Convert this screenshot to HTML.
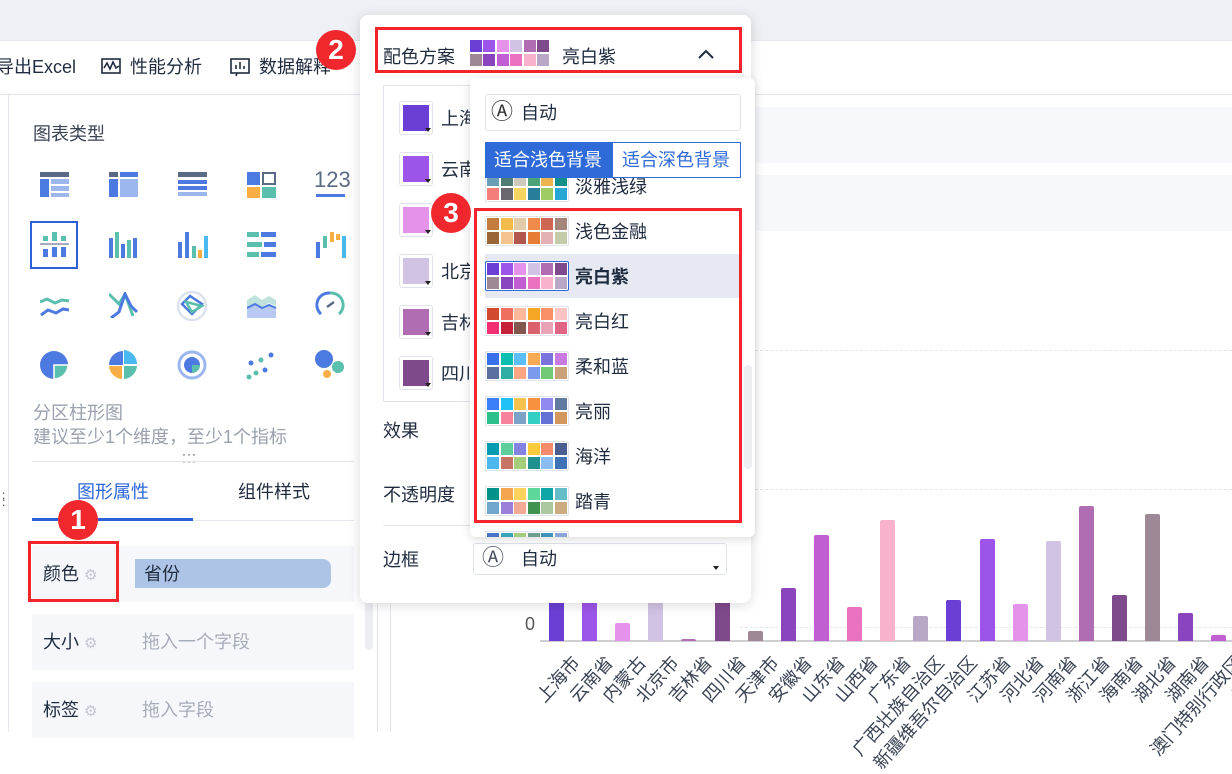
<!DOCTYPE html>
<html><head><meta charset="utf-8"><style>
*{margin:0;padding:0;box-sizing:border-box}
body{width:1232px;height:732px;overflow:hidden;background:#fff;font-family:"Liberation Sans","Noto Sans CJK SC",sans-serif;color:#1f2b3e;font-size:18px;position:relative}
.a{position:absolute}
.t{position:absolute;white-space:nowrap;line-height:20px}
.sw{position:absolute;display:grid;grid-template-columns:repeat(6,12px);grid-auto-rows:12px;gap:2px 1.6px;padding:1px;border:1px solid #dfe3ea;border-radius:2px;background:#fff}
.sw i{display:block}
.badge{position:absolute;width:40px;height:40px;border-radius:50%;background:#f0282d;color:#fff;font-size:28px;line-height:40px;text-align:center;font-weight:bold}
.red{position:absolute;border:3px solid #f2242c}
.bar{position:absolute;width:15px;bottom:91px;border-radius:2px 2px 0 0}
.lb{position:absolute;top:650px;width:0;height:0}
.lb span{position:absolute;right:0;top:0;white-space:nowrap;transform-origin:right top;transform:rotate(-48deg);font-size:18px;color:#3a4354}
.row{position:absolute;left:32px;width:322px;background:#f5f7fb}
.cs{position:absolute;left:399px;width:34px;height:34px;border:1px solid #dfe3ea;border-radius:3px;padding:3px}
.cs i{display:block;width:100%;height:100%}
.cs b{position:absolute;right:1px;bottom:2px;border:3px solid transparent;border-top:4px solid #222;border-bottom:0}
.g{color:#c2c6ce;font-size:15px}
</style></head><body>
<div class="a" style="left:0;top:0;width:1232px;height:40px;background:#eef0f5"></div>
<div class="a" style="left:0;top:40px;width:1232px;height:1px;background:#e3e6ed"></div>
<div class="a" style="left:0;top:94px;width:1232px;height:1px;background:#e3e6ed"></div>
<div class="t" style="left:-4px;top:57px">导出Excel</div>
<svg class="a" style="left:101px;top:57px" width="20" height="20" viewBox="0 0 20 20" fill="none" stroke="#1f2b3e" stroke-width="1.6"><rect x="1" y="2" width="18" height="14"/><path d="M3 11l3-5 3 6 3-7 3 6 3-2"/></svg>
<div class="t" style="left:130px;top:57px">性能分析</div>
<svg class="a" style="left:230px;top:57px" width="20" height="20" viewBox="0 0 20 20" fill="none" stroke="#1f2b3e" stroke-width="1.6"><rect x="1" y="2" width="18" height="14"/><path d="M6 12V8M10 12V5M14 12V9M7 16l-1 3"/></svg>
<div class="t" style="left:259px;top:57px">数据解释</div>

<div class="a" style="left:8px;top:95px;width:1px;height:637px;background:#e3e6ed"></div>
<div class="a" style="left:377px;top:95px;width:1px;height:637px;background:#e3e6ed"></div>
<div class="a" style="left:390px;top:279px;width:1px;height:453px;background:#e3e6ed"></div>
<div class="t" style="left:33px;top:124px;color:#3a4354">图表类型</div>
<svg class="a" style="left:40px;top:172px" width="30" height="26"><rect x="0" y="0" width="29" height="5" fill="#5c6b85"/><rect x="0" y="7" width="9" height="18" fill="#4d7ae0"/><rect x="11" y="7" width="18" height="5" fill="#9cb6ee"/><rect x="11" y="14" width="18" height="5" fill="#9cb6ee"/><rect x="11" y="21" width="18" height="4" fill="#9cb6ee"/></svg>
<svg class="a" style="left:109px;top:172px" width="30" height="26"><rect x="0" y="0" width="9" height="5" fill="#5c6b85"/><rect x="11" y="0" width="18" height="5" fill="#4d7ae0"/><rect x="0" y="7" width="9" height="18" fill="#4d7ae0"/><rect x="11" y="7" width="18" height="18" fill="#9cb6ee"/></svg>
<svg class="a" style="left:178px;top:172px" width="30" height="26"><rect x="0" y="0" width="29" height="5" fill="#5c6b85"/><rect x="0" y="8" width="29" height="4" fill="#4d7ae0"/><rect x="0" y="14" width="29" height="4" fill="#4d7ae0"/><rect x="0" y="20" width="29" height="4" fill="#9cb6ee"/></svg>
<svg class="a" style="left:247px;top:172px" width="30" height="26"><rect x="0" y="0" width="13" height="13" fill="#4d7ae0"/><rect x="16" y="1" width="12" height="11" fill="none" stroke="#5c6b85" stroke-width="2"/><rect x="0" y="15" width="13" height="11" fill="#f9ae45"/><rect x="15" y="15" width="14" height="11" fill="#5bbfae"/></svg>
<div class="t" style="left:314px;top:170px;font-size:22px;color:#5c6b85">123</div>
<div class="a" style="left:316px;top:194px;width:29px;height:3px;background:#4d7ae0"></div>
<div class="a" style="left:30px;top:221px;width:48px;height:48px;border:2px solid #2d5fd8"></div>
<svg class="a" style="left:40px;top:232px" width="30" height="26"><rect x="3" y="4" width="5" height="5" fill="#5bbfae"/><rect x="12" y="0" width="5" height="9" fill="#5bbfae"/><rect x="21" y="4" width="5" height="5" fill="#5bbfae"/><rect x="0" y="11" width="29" height="2" fill="#aab"/><rect x="3" y="17" width="5" height="8" fill="#4d7ae0"/><rect x="12" y="15" width="5" height="10" fill="#4d7ae0"/><rect x="21" y="15" width="5" height="10" fill="#4d7ae0"/></svg>
<svg class="a" style="left:109px;top:232px" width="30" height="26"><rect x="0" y="6" width="4" height="20" fill="#4d7ae0"/><rect x="6" y="0" width="4" height="26" fill="#5bbfae"/><rect x="12" y="12" width="4" height="14" fill="#4d7ae0"/><rect x="18" y="8" width="4" height="18" fill="#5bbfae"/><rect x="24" y="6" width="4" height="20" fill="#4d7ae0"/></svg>
<svg class="a" style="left:178px;top:232px" width="30" height="26"><rect x="0" y="10" width="4" height="16" fill="#4d7ae0"/><rect x="7" y="0" width="4" height="26" fill="#4d7ae0"/><rect x="14" y="14" width="4" height="12" fill="#5bbfae"/><rect x="20" y="18" width="4" height="8" fill="#f9ae45"/><rect x="26" y="4" width="4" height="22" fill="#49b9f0"/></svg>
<svg class="a" style="left:247px;top:232px" width="30" height="26"><rect x="0" y="0" width="12" height="5" fill="#5bbfae"/><rect x="14" y="0" width="15" height="5" fill="#4d7ae0"/><rect x="0" y="10" width="15" height="5" fill="#5bbfae"/><rect x="17" y="10" width="12" height="5" fill="#4d7ae0"/><rect x="0" y="20" width="12" height="5" fill="#5bbfae"/><rect x="14" y="20" width="15" height="5" fill="#4d7ae0"/></svg>
<svg class="a" style="left:316px;top:232px" width="30" height="26"><rect x="0" y="10" width="4" height="16" fill="#4d7ae0"/><rect x="7" y="4" width="4" height="12" fill="#5bbfae"/><rect x="14" y="0" width="4" height="10" fill="#f9ae45"/><rect x="20" y="2" width="4" height="6" fill="#f9ae45"/><rect x="26" y="4" width="4" height="22" fill="#49b9f0"/></svg>
<svg class="a" style="left:40px;top:292px" width="30" height="26" fill="none" stroke-width="3"><path d="M0 10l7-3 8 4 7-3 7 1" stroke="#5bbfae"/><path d="M1 23l7-5 8 3 7-4 6 1" stroke="#4d7ae0"/></svg>
<svg class="a" style="left:109px;top:292px" width="30" height="26" fill="none" stroke-width="3"><path d="M0 2l10 10 6-10 8 22" stroke="#5bbfae"/><path d="M2 26l8-6 6-18 6 12 6 6" stroke="#4d7ae0"/></svg>
<svg class="a" style="left:176px;top:290px" width="32" height="32" fill="none" stroke-width="2.5"><circle cx="16" cy="16" r="14" stroke="#dde3ee"/><path d="M6 14l8-8 12 8-10 10z" stroke="#4d7ae0"/><path d="M10 12l16 4-10 6z" stroke="#5bbfae"/></svg>
<svg class="a" style="left:247px;top:292px" width="30" height="26"><path d="M0 8l8-5 7 5 7-4 7 4v6l-7-3-7 4-7-4-8 4z" fill="#bfe3dc"/><path d="M0 16l8-4 7 4 7-3 7 3v10H0z" fill="#b8caf3"/><path d="M0 16l8-4 7 4 7-3 7 3" stroke="#4d7ae0" stroke-width="2" fill="none"/></svg>
<svg class="a" style="left:315px;top:290px" width="30" height="30" fill="none" stroke-width="3"><path d="M6 24A12 12 0 0 1 15 3" stroke="#4d7ae0"/><path d="M15 3a12 12 0 0 1 9 21" stroke="#5bbfae"/><path d="M12 17l7-5" stroke="#5c6b85" stroke-width="2.5"/></svg>
<svg class="a" style="left:39px;top:350px" width="30" height="30"><circle cx="15" cy="15" r="14" fill="#4d7ae0"/><path d="M15 15h14a14 14 0 0 1-14 14z" fill="#5bbfae" stroke="#fff" stroke-width="1.5"/></svg>
<svg class="a" style="left:108px;top:350px" width="30" height="30"><path d="M15 15V1A14 14 0 0 0 1 15z" fill="#4d7ae0"/><path d="M16 14V0a14 14 0 0 1 13 14z" fill="#49b9f0"/><path d="M14 16H1a14 14 0 0 0 13 13z" fill="#f9ae45"/><path d="M16 16h13a14 14 0 0 1-13 13z" fill="#5bbfae"/></svg>
<svg class="a" style="left:177px;top:350px" width="30" height="30" fill="none"><circle cx="15" cy="15" r="13" stroke="#9cb6ee" stroke-width="3"/><circle cx="15" cy="15" r="8" fill="#4d7ae0"/><path d="M15 15h8a8 8 0 0 1-8 8z" fill="#5bbfae"/></svg>
<svg class="a" style="left:246px;top:352px" width="30" height="28"><circle cx="3" cy="25" r="2.5" fill="#5bbfae"/><circle cx="10" cy="21" r="2.5" fill="#5bbfae"/><circle cx="5" cy="11" r="2.5" fill="#4d7ae0"/><circle cx="15" cy="8" r="2.5" fill="#5bbfae"/><circle cx="19" cy="18" r="2.5" fill="#4d7ae0"/><circle cx="25" cy="3" r="2.5" fill="#4d7ae0"/></svg>
<svg class="a" style="left:314px;top:349px" width="32" height="30"><circle cx="10" cy="10" r="9" fill="#4d7ae0"/><circle cx="24" cy="18" r="6" fill="#5bbfae"/><circle cx="13" cy="25" r="4" fill="#f9ae45"/></svg>
<div class="t" style="left:33px;top:403px;color:#9aa1ad">分区柱形图</div>
<div class="t" style="left:33px;top:427px;color:#9aa1ad">建议至少1个维度，至少1个指标</div>
<div class="t" style="left:182px;top:451px;color:#333;font-size:12px;letter-spacing:1px;line-height:7px">···<br>···</div>
<div class="a" style="left:32px;top:461px;width:322px;height:1px;background:#e3e6ed"></div>
<div class="t" style="left:2px;top:492px;font-size:12px;line-height:7px;color:#333">:<br>:</div>
<div class="t" style="left:77px;top:482px;color:#2d67d8">图形属性</div>
<div class="t" style="left:238px;top:482px">组件样式</div>
<div class="a" style="left:32px;top:520px;width:322px;height:1px;background:#e3e6ed"></div>
<div class="a" style="left:32px;top:518px;width:161px;height:3px;background:#2d5fd8"></div>
<div class="row" style="top:546px;height:56px"></div>
<div class="row" style="top:614px;height:56px"></div>
<div class="row" style="top:682px;height:56px"></div>
<div class="a" style="left:135px;top:559px;width:196px;height:29px;background:#aec4e6;border-radius:0 8px 8px 0"></div>
<div class="t" style="left:144px;top:564px">省份</div>
<div class="t" style="left:43px;top:564px">颜色 <span class="g">⚙</span></div>
<div class="t" style="left:43px;top:632px">大小 <span class="g">⚙</span></div>
<div class="t" style="left:142px;top:632px;color:#a7adb8">拖入一个字段</div>
<div class="t" style="left:43px;top:700px">标签 <span class="g">⚙</span></div>
<div class="t" style="left:142px;top:700px;color:#a7adb8">拖入字段</div>
<div class="a" style="left:365px;top:470px;width:8px;height:180px;background:#eceef2;border-radius:4px"></div>
<div class="red" style="left:28px;top:541px;width:91px;height:61px"></div>
<div class="badge" style="left:58px;top:500px">1</div>

<div class="a" style="left:391px;top:107px;width:841px;height:56px;background:#f7f8fc"></div>
<div class="a" style="left:391px;top:175px;width:841px;height:56px;background:#f7f8fc"></div>
<div class="a" style="left:755px;top:350px;width:477px;border-top:1px dashed #e3e6ed"></div>
<div class="a" style="left:755px;top:489px;width:477px;border-top:1px dashed #e3e6ed"></div>
<div class="a" style="left:740px;top:627px;width:492px;border-top:1px dashed #e3e6ed"></div>
<div class="t" style="left:525px;top:614px;color:#555">0</div>
<div class="a" style="left:540px;top:640px;width:692px;height:2px;background:#cfcfd3"></div>
<div class="bar" style="left:549px;height:60px;background:#6b3fd6"></div>
<div class="bar" style="left:582px;height:60px;background:#9c55e8"></div>
<div class="bar" style="left:615px;height:18px;background:#e592ea"></div>
<div class="bar" style="left:648px;height:60px;background:#d1c3e3"></div>
<div class="bar" style="left:681px;height:2px;background:#b16db4"></div>
<div class="bar" style="left:715px;height:55px;background:#7f4a8b"></div>
<div class="bar" style="left:748px;height:10px;background:#9e8896"></div>
<div class="bar" style="left:781px;height:53px;background:#8a44bd"></div>
<div class="bar" style="left:814px;height:106px;background:#c15ed2"></div>
<div class="bar" style="left:847px;height:34px;background:#eb72c0"></div>
<div class="bar" style="left:880px;height:121px;background:#f9b2cb"></div>
<div class="bar" style="left:913px;height:25px;background:#b9a7c8"></div>
<div class="bar" style="left:946px;height:41px;background:#6b3fd6"></div>
<div class="bar" style="left:980px;height:102px;background:#9c55e8"></div>
<div class="bar" style="left:1013px;height:37px;background:#e592ea"></div>
<div class="bar" style="left:1046px;height:100px;background:#d1c3e3"></div>
<div class="bar" style="left:1079px;height:135px;background:#b16db4"></div>
<div class="bar" style="left:1112px;height:46px;background:#7f4a8b"></div>
<div class="bar" style="left:1145px;height:127px;background:#9e8896"></div>
<div class="bar" style="left:1178px;height:28px;background:#8a44bd"></div>
<div class="bar" style="left:1211px;height:6px;background:#c15ed2"></div>
<div class="lb" style="left:566px"><span>上海市</span></div>
<div class="lb" style="left:599px"><span>云南省</span></div>
<div class="lb" style="left:632px"><span>内蒙古</span></div>
<div class="lb" style="left:665px"><span>北京市</span></div>
<div class="lb" style="left:698px"><span>吉林省</span></div>
<div class="lb" style="left:732px"><span>四川省</span></div>
<div class="lb" style="left:765px"><span>天津市</span></div>
<div class="lb" style="left:798px"><span>安徽省</span></div>
<div class="lb" style="left:831px"><span>山东省</span></div>
<div class="lb" style="left:864px"><span>山西省</span></div>
<div class="lb" style="left:897px"><span>广东省</span></div>
<div class="lb" style="left:930px"><span>广西壮族自治区</span></div>
<div class="lb" style="left:963px"><span>新疆维吾尔自治区</span></div>
<div class="lb" style="left:997px"><span>江苏省</span></div>
<div class="lb" style="left:1030px"><span>河北省</span></div>
<div class="lb" style="left:1063px"><span>河南省</span></div>
<div class="lb" style="left:1096px"><span>浙江省</span></div>
<div class="lb" style="left:1129px"><span>海南省</span></div>
<div class="lb" style="left:1162px"><span>湖北省</span></div>
<div class="lb" style="left:1195px"><span>湖南省</span></div>
<div class="lb" style="left:1228px"><span>澳门特别行政区</span></div>
<div class="lb" style="left:1261px"><span>甘肃省</span></div>

<div class="a" style="left:360px;top:15px;width:391px;height:588px;background:#fff;border-radius:8px;box-shadow:0 2px 12px rgba(0,0,0,.15)"></div>
<div class="t" style="left:383px;top:47px">配色方案</div>
<div class="sw" style="left:470px;top:40px;border:none;padding:0;gap:2px 1.4px"><i style="background:#6b3fd6"></i><i style="background:#9c55e8"></i><i style="background:#e592ea"></i><i style="background:#d1c3e3"></i><i style="background:#b16db4"></i><i style="background:#7f4a8b"></i><i style="background:#9e8896"></i><i style="background:#8a44bd"></i><i style="background:#c15ed2"></i><i style="background:#eb72c0"></i><i style="background:#f9b2cb"></i><i style="background:#b9a7c8"></i></div>
<div class="t" style="left:562px;top:47px">亮白紫</div>
<svg class="a" style="left:697px;top:48px" width="18" height="12" fill="none" stroke="#1f2b3e" stroke-width="2"><path d="M2 10l7-7 7 7"/></svg>
<div class="red" style="left:375px;top:27px;width:367px;height:46px"></div>
<div class="badge" style="left:316px;top:30px">2</div>
<div class="a" style="left:383px;top:85px;width:120px;height:317px;border:1px solid #dfe3ea"></div>
<div class="cs" style="top:101px"><i style="background:#6b3fd6"></i><b></b></div><div class="t" style="left:441px;top:109px">上海</div>
<div class="cs" style="top:152px"><i style="background:#9c55e8"></i><b></b></div><div class="t" style="left:441px;top:160px">云南</div>
<div class="cs" style="top:203px"><i style="background:#e592ea"></i><b></b></div>
<div class="cs" style="top:254px"><i style="background:#d1c3e3"></i><b></b></div><div class="t" style="left:441px;top:262px">北京</div>
<div class="cs" style="top:305px"><i style="background:#b16db4"></i><b></b></div><div class="t" style="left:441px;top:313px">吉林</div>
<div class="cs" style="top:356px"><i style="background:#7f4a8b"></i><b></b></div><div class="t" style="left:441px;top:364px">四川</div>
<div class="t" style="left:383px;top:421px">效果</div>
<div class="t" style="left:383px;top:485px">不透明度</div>
<div class="a" style="left:383px;top:525px;width:367px;height:1px;background:#e3e6ed"></div>
<div class="t" style="left:383px;top:550px">边框</div>
<div class="a" style="left:473px;top:543px;width:254px;height:32px;border:1px solid #dfe3ea;border-radius:3px"></div>
<div class="t" style="left:482px;top:548px;font-size:22px;color:#4a5263">Ⓐ</div>
<div class="t" style="left:521px;top:549px">自动</div>
<div class="a" style="left:713px;top:566px;border:3px solid transparent;border-top:4px solid #222"></div>

<div class="a" style="left:470px;top:78px;width:285px;height:459px;background:#fff;border-radius:6px;box-shadow:0 2px 10px rgba(0,0,0,.15);overflow:hidden">
<div class="a" style="left:15px;top:16px;width:256px;height:37px;border:1px solid #dfe3ea;border-radius:3px"></div>
<div class="t" style="left:21px;top:24px;font-size:22px;color:#333">Ⓐ</div>
<div class="t" style="left:51px;top:25px">自动</div>
<div class="sw" style="left:15px;top:94px"><i style="background:#6a9fb5"></i><i style="background:#4f7d74"></i><i style="background:#cdc9bd"></i><i style="background:#4aa478"></i><i style="background:#ecb44f"></i><i style="background:#138f8a"></i><i style="background:#f47f7a"></i><i style="background:#6b676e"></i><i style="background:#f5d460"></i><i style="background:#267e9b"></i><i style="background:#9fcd63"></i><i style="background:#28a7d4"></i></div>
<div class="t" style="left:105px;top:99px">淡雅浅绿</div>
<div class="a" style="left:15px;top:64px;width:256px;height:36px;border:1px solid #2f6ad9;background:#fff"></div>
<div class="a" style="left:15px;top:64px;width:128px;height:36px;background:#2f6ad9"></div>
<div class="t" style="left:24px;top:72px;color:#fff">适合浅色背景</div>
<div class="t" style="left:152px;top:72px;color:#2f6ad9">适合深色背景</div>
<div class="sw" style="left:15px;top:138px"><i style="background:#c27c3c"></i><i style="background:#f3bb4b"></i><i style="background:#e2cba7"></i><i style="background:#ee8b4b"></i><i style="background:#cf6553"></i><i style="background:#a3857a"></i><i style="background:#9a6638"></i><i style="background:#f5c48e"></i><i style="background:#b2574e"></i><i style="background:#e77c37"></i><i style="background:#e3b0b4"></i><i style="background:#c4cba8"></i></div>
<div class="t" style="left:105px;top:144px">浅色金融</div>
<div class="a" style="left:15px;top:176px;width:254px;height:44px;background:#e6e9f1"></div>
<div class="sw" style="left:15px;top:183px;border-color:#2f6ad9"><i style="background:#6b3fd6"></i><i style="background:#9c55e8"></i><i style="background:#e592ea"></i><i style="background:#d1c3e3"></i><i style="background:#b16db4"></i><i style="background:#7f4a8b"></i><i style="background:#9e8896"></i><i style="background:#8a44bd"></i><i style="background:#c15ed2"></i><i style="background:#eb72c0"></i><i style="background:#f9b2cb"></i><i style="background:#b9a7c8"></i></div>
<div class="t" style="left:105px;top:189px;font-weight:bold">亮白紫</div>
<div class="sw" style="left:15px;top:228px"><i style="background:#d14a30"></i><i style="background:#ef6f5e"></i><i style="background:#fdb89b"></i><i style="background:#f5a623"></i><i style="background:#fb8f67"></i><i style="background:#fcc3c3"></i><i style="background:#f22f73"></i><i style="background:#c6213b"></i><i style="background:#83574e"></i><i style="background:#d9626c"></i><i style="background:#e9a3b6"></i><i style="background:#e06584"></i></div>
<div class="t" style="left:105px;top:234px">亮白红</div>
<div class="sw" style="left:15px;top:273px"><i style="background:#3770e9"></i><i style="background:#0bbfb0"></i><i style="background:#5bbefa"></i><i style="background:#f8ab53"></i><i style="background:#7b72dd"></i><i style="background:#c87ae1"></i><i style="background:#5a6f9e"></i><i style="background:#30ada5"></i><i style="background:#fea681"></i><i style="background:#7b99ed"></i><i style="background:#72c974"></i><i style="background:#c9a17a"></i></div>
<div class="t" style="left:105px;top:279px">柔和蓝</div>
<div class="sw" style="left:15px;top:318px"><i style="background:#3a7ff6"></i><i style="background:#20c1f7"></i><i style="background:#f6c24e"></i><i style="background:#f8913f"></i><i style="background:#9088ee"></i><i style="background:#617aa0"></i><i style="background:#2ec08a"></i><i style="background:#f7829b"></i><i style="background:#7ea1c7"></i><i style="background:#34cfc3"></i><i style="background:#6271d3"></i><i style="background:#d3975d"></i></div>
<div class="t" style="left:105px;top:324px">亮丽</div>
<div class="sw" style="left:15px;top:363px"><i style="background:#039bb2"></i><i style="background:#5dcd9c"></i><i style="background:#8483e3"></i><i style="background:#fdca3b"></i><i style="background:#f48b6b"></i><i style="background:#4a5f8f"></i><i style="background:#4cb7ee"></i><i style="background:#c67463"></i><i style="background:#a4cd7c"></i><i style="background:#1f908d"></i><i style="background:#8bbdf0"></i><i style="background:#4072b8"></i></div>
<div class="t" style="left:105px;top:369px">海洋</div>
<div class="sw" style="left:15px;top:408px"><i style="background:#01928a"></i><i style="background:#f5a550"></i><i style="background:#ffd35b"></i><i style="background:#5ed79d"></i><i style="background:#10a5a7"></i><i style="background:#66bdca"></i><i style="background:#72a7cc"></i><i style="background:#9b7fd8"></i><i style="background:#f1ab94"></i><i style="background:#3f924f"></i><i style="background:#abc8a0"></i><i style="background:#cdab80"></i></div>
<div class="t" style="left:105px;top:414px">踏青</div>
<div class="sw" style="left:15px;top:453px"><i style="background:#4a72c8"></i><i style="background:#3aa3b8"></i><i style="background:#a3cd7c"></i><i style="background:#6d9f8f"></i><i style="background:#3f92b8"></i><i style="background:#8aa6d8"></i></div>
<div class="a" style="left:274px;top:287px;width:8px;height:104px;background:#eceef2;border-radius:4px"></div>
</div>
<div class="red" style="left:474px;top:208px;width:268px;height:315px"></div>
<div class="badge" style="left:431px;top:193px">3</div>
</body></html>
